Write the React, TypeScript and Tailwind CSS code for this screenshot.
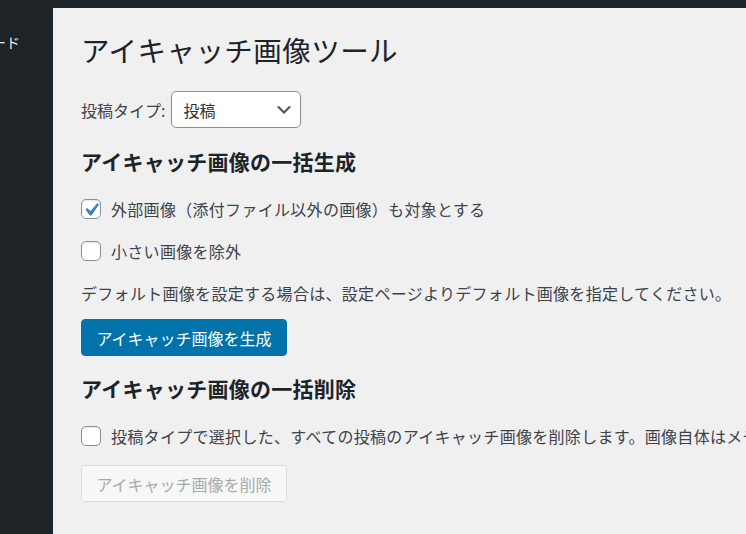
const font = 'font-["Noto_Sans_CJK_JP","Noto_Sans",sans-serif]';

function Checkbox({ checked }: { checked?: boolean }) {
  return (
    <span className="relative block h-[20px] w-[20px] shrink-0 rounded-[5px] border border-[#8c8f94] bg-white shadow-[inset_0_1px_2px_rgba(0,0,0,0.1)]">
      {checked && (
        <svg viewBox="0 0 20 20" className="absolute left-[-4px] top-[-3px] h-[26px] w-[26px]">
          <path d="M14.83 4.89l1.34.94-5.81 8.38H9.02L5.78 9.67l1.34-1.25 2.57 2.4z" fill="#3582c4" />
        </svg>
      )}
    </span>
  );
}

function CheckRow({ label, checked, mt }: { label: string; checked?: boolean; mt: string }) {
  return (
    <label className={`flex h-[20px] items-center gap-[10px] whitespace-nowrap ${mt}`}>
      <Checkbox checked={checked} />
      <span className="text-[16px] leading-[20px] tracking-[0.3px] text-[#3c434a]">{label}</span>
    </label>
  );
}

export default function App() {
  return (
    <div className={`flex h-[534px] w-[746px] flex-col overflow-hidden bg-[#f0f0f1] ${font}`}>
      <div className="h-[8px] shrink-0 bg-[#1d2327]" />
      <div className="flex min-h-0 flex-1">
        <aside className="w-[53px] shrink-0 overflow-hidden bg-[#1d2327]">
          <div className="ml-[-8px] mt-[22px] whitespace-nowrap text-[14px] leading-[24px] text-[#f0f0f1]">ード</div>
        </aside>
        <main className="min-w-0 flex-1 overflow-hidden pl-[28px]">
          <h1 className="mt-[24px] h-[36px] whitespace-nowrap text-[28.5px] font-normal leading-[36px] tracking-[0.45px] text-[#1d2327]">
            アイキャッチ画像ツール
          </h1>

          <div className="mt-[23px] flex h-[37px] items-center gap-[6px]">
            <span className="text-[16px] text-[#3c434a]">投稿タイプ:</span>
            <div className="flex h-[37px] w-[130px] items-center justify-between rounded-[5px] border border-[#8c8f94] bg-white pl-[11px] pr-[6px]">
              <span className="text-[16px] text-[#2c3338]">投稿</span>
              <svg viewBox="0 0 20 20" className="h-[20px] w-[20px]">
                <path d="M5 6l5 5 5-5 2 1-7 7-7-7 2-1z" fill="#555" />
              </svg>
            </div>
          </div>

          <h2 className="mt-[19px] h-[28px] whitespace-nowrap text-[21px] font-bold leading-[28px] tracking-[0.25px] text-[#1d2327]">
            アイキャッチ画像の一括生成
          </h2>

          <CheckRow mt="mt-[24px]" checked label="外部画像（添付ファイル以外の画像）も対象とする" />
          <CheckRow mt="mt-[22px]" label="小さい画像を除外" />

          <p className="mt-[20px] h-[24px] whitespace-nowrap text-[16px] leading-[24px] tracking-[0.3px] text-[#3c434a]">
            デフォルト画像を設定する場合は、設定ページよりデフォルト画像を指定してください。
          </p>

          <button
            type="button"
            className="mt-[14px] flex h-[37px] w-[206px] items-center justify-center rounded-[4px] border border-[#0073aa] bg-[#0073aa] text-[16px] text-white"
          >
            アイキャッチ画像を生成
          </button>

          <h2 className="mt-[18px] h-[28px] whitespace-nowrap text-[21px] font-bold leading-[28px] tracking-[0.25px] text-[#1d2327]">
            アイキャッチ画像の一括削除
          </h2>

          <CheckRow
            mt="mt-[24px]"
            label="投稿タイプで選択した、すべての投稿のアイキャッチ画像を削除します。画像自体はメディアライブラリに残ります。"
          />

          <button
            type="button"
            disabled
            className="mt-[19px] flex h-[37px] w-[206px] items-center justify-center rounded-[4px] border border-[#dcdcde] bg-[#f6f7f7] text-[16px] text-[#a7aaad]"
          >
            アイキャッチ画像を削除
          </button>
        </main>
      </div>
    </div>
  );
}
